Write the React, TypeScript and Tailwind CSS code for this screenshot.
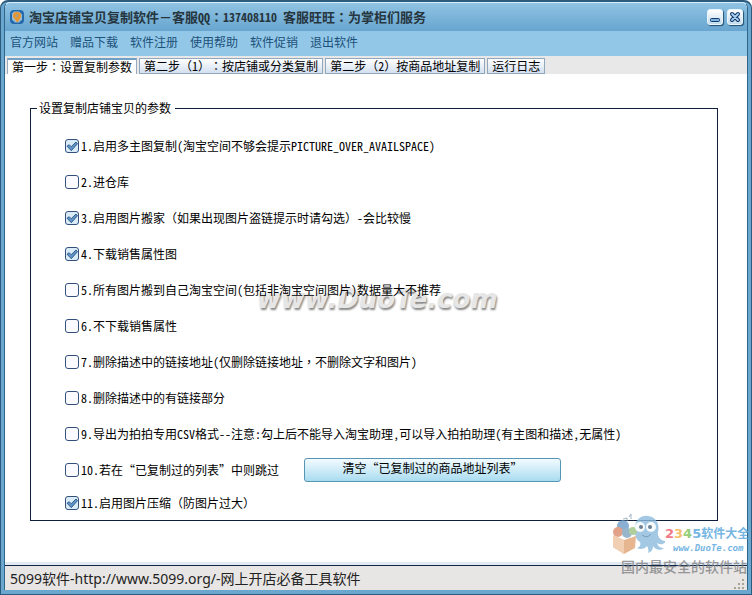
import { Fragment, useState } from "react";

const menuItems = ["官方网站", "赠品下载", "软件注册", "使用帮助", "软件促销", "退出软件"];

const tabs = [
    "第一步：设置复制参数",
    "第二步（1）：按店铺或分类复制",
    "第二步（2）按商品地址复制",
    "运行日志",
];

interface Option {
    id: number;
    label: string;
    checked: boolean;
}

const options: Option[] = [
    { id: 1, label: "1.启用多主图复制(淘宝空间不够会提示PICTURE_OVER_AVAILSPACE)", checked: true },
    { id: 2, label: "2.进仓库", checked: false },
    { id: 3, label: "3.启用图片搬家（如果出现图片盗链提示时请勾选）-会比较慢", checked: true },
    { id: 4, label: "4.下载销售属性图", checked: true },
    { id: 5, label: "5.所有图片搬到自己淘宝空间(包括非淘宝空间图片)数据量大不推荐", checked: false },
    { id: 6, label: "6.不下载销售属性", checked: false },
    { id: 7, label: "7.删除描述中的链接地址(仅删除链接地址，不删除文字和图片)", checked: false },
    { id: 8, label: "8.删除描述中的有链接部分", checked: false },
    {
        id: 9,
        label: "9.导出为拍拍专用CSV格式--注意:勾上后不能导入淘宝助理,可以导入拍拍助理(有主图和描述,无属性)",
        checked: false,
    },
    { id: 10, label: "10.若在“已复制过的列表”中则跳过", checked: false },
    { id: 11, label: "11.启用图片压缩（防图片过大）", checked: true },
];

// Half-width runs are set in a mono face at half the CJK advance,
// full-width colons and commas are centred in their cell.
function Mixed({ text }: { text: string }) {
    const parts = text.split(/([\x20-\x7e]+|[：，])/);
    return (
        <>
            {parts.map((part, i) => {
                if (/^[\x20-\x7e]+$/.test(part)) {
                    return (
                        <span key={i} className="font-['Noto_Sans_Mono_CJK_SC','Liberation_Mono',monospace] text-[12px]">
                            {part}
                        </span>
                    );
                }
                if (/^[：，]$/.test(part)) {
                    return (
                        <span key={i} lang="zh-TW" className="font-['Noto_Sans_CJK_TC',sans-serif]">
                            {part}
                        </span>
                    );
                }
                return <Fragment key={i}>{part}</Fragment>;
            })}
        </>
    );
}

function AppIcon() {
    return (
        <svg className="h-4 w-4 shrink-0" viewBox="0 0 16 16">
            <rect x="1" y="1" width="14" height="14" rx="4" fill="#2469ad" />
            <path d="M5 2.500h5l3 3v5l-3 3H6l-3-3v-6z" fill="#9dbccd" />
            <path d="M8 3a4 4 0 0 1 4 4c0 2.600-2.200 3.500-3 6H7.500C7.500 10.500 4 9.600 4 7a4 4 0 0 1 4-4z" fill="#e8962f" />
            <circle cx="8" cy="6.800" r="1.500" fill="#a9a08a" />
        </svg>
    );
}

function TitleBar() {
    return (
        <header className="flex h-7 items-center bg-linear-to-b from-[#8fc3e3] to-[#68a5cf] pr-1 pl-1">
            <AppIcon />
            <h1 className="ml-1 flex-1 text-[13px] leading-4 font-bold whitespace-nowrap text-[#26363f]">
                <Mixed text="淘宝店铺宝贝复制软件－客服QQ：137408110 客服旺旺：为掌柜们服务" />
            </h1>
            <div className="flex gap-1">
                <button
                    aria-label="最小化"
                    className="flex h-4 w-4 items-center justify-center rounded-[3px] border border-[#eaf5fb] bg-linear-to-b from-white to-[#c4dcec] shadow-[1px_1px_1px_#24506f]"
                >
                    <svg className="h-3 w-3" viewBox="0 0 12 12">
                        <rect x="1.500" y="7.500" width="9" height="3" rx="1" fill="#7db4de" stroke="#12396b" />
                    </svg>
                </button>
                <button
                    aria-label="关闭"
                    className="flex h-4 w-4 items-center justify-center rounded-[3px] border border-[#eaf5fb] bg-linear-to-b from-white to-[#c4dcec] shadow-[1px_1px_1px_#24506f]"
                >
                    <svg className="h-3 w-3" viewBox="0 0 12 12" strokeLinecap="round">
                        <path d="M3 3l6 6M9 3l-6 6" stroke="#12396b" strokeWidth="4" />
                        <path d="M3 3l6 6M9 3l-6 6" stroke="#a9d0ee" strokeWidth="1.800" />
                    </svg>
                </button>
            </div>
        </header>
    );
}

function OptionRow({ option, children }: { option: Option; children?: React.ReactNode }) {
    const [checked, setChecked] = useState(option.checked);

    return (
        <div className="flex h-9 items-center last:h-[30px]">
            <label className="flex items-center gap-0.5 whitespace-nowrap">
                <span className="relative flex h-3.5 w-3.5">
                    <input
                        type="checkbox"
                        checked={checked}
                        onChange={() => setChecked(!checked)}
                        className="h-3.5 w-3.5 appearance-none rounded-[3px] border border-[#34507c] bg-[#fafaff] checked:bg-[#d9ecf8]"
                    />
                    {checked && (
                        <svg className="pointer-events-none absolute inset-0 h-3.5 w-3.5" viewBox="0 0 14 14">
                            <path
                                d="M2 7.200l2.200-1.500 2 2 4.800-4.700 1.500 1.700-6.200 7z"
                                fill="#5f93c4"
                                stroke="#2c5486"
                                strokeWidth="0.900"
                                strokeLinejoin="round"
                            />
                        </svg>
                    )}
                </span>
                <span>
                    <Mixed text={option.label} />
                </span>
            </label>
            {children}
        </div>
    );
}

function SiteLogo() {
    return (
        <svg className="h-12 w-[52px] shrink-0" viewBox="2 -3 52 48">
            <path d="M12 6l4-1v3M18 4l2-3v5" fill="none" stroke="#8aa3b5" />
            <path
                d="M24 17C23 7 30 2 37 3c8 1 12 8 10 16-1 5 3 9 8 9-2 4-6 4-9 2 1 4 4 5 7 5-3 3-9 2-11-2 0 4-2 6-5 7 1-3 0-5-1-7-2 3-7 4-10 2 3-1 4-3 3-6-4-2-5-7-5-12z"
                fill="#8dbbdd"
            />
            <circle cx="12" cy="13" r="6" fill="#6f9cc8" />
            <circle cx="7" cy="19" r="5" fill="#dc8b6d" />
            <circle cx="16" cy="20" r="5" fill="#7fa4bf" />
            <circle cx="22" cy="18" r="4" fill="#9cc486" />
            <path d="M1 22l12 5 12-4-1 12-11 6-11-7z" fill="#dfa574" />
            <path d="M1 22l12 5v14L2 34z" fill="#edc4a0" />
            <circle cx="29" cy="14" r="5" fill="#f5f9fb" />
            <circle cx="40" cy="14" r="5" fill="#f5f9fb" />
            <circle cx="30" cy="14" r="2" fill="#456078" />
            <circle cx="39" cy="14" r="2" fill="#456078" />
            <path d="M31 22q5 4 9-1" fill="none" stroke="#5a86aa" />
        </svg>
    );
}

function SiteBadge() {
    return (
        <div className="pointer-events-none absolute right-0 bottom-5 w-[138px] opacity-80">
            <div className="flex">
                <SiteLogo />
                <div className="pt-4 font-bold whitespace-nowrap">
                    <p className="text-[12px] leading-[14px] text-[#54a5dc]">
                        <span className="font-['DejaVu_Sans',sans-serif] text-[13px]">
                            <span className="text-[#ee5a6c]">2</span>
                            <span className="text-[#f3b04c]">3</span>
                            <span className="text-[#7dc35c]">4</span>
                            <span>5</span>
                        </span>
                        软件大全
                    </p>
                    <p className="pl-2 font-['DejaVu_Sans_Mono',monospace] text-[9px] leading-[14px] text-[#54a5dc] italic">
                        www.DuoTe.com
                    </p>
                </div>
            </div>
            <p className="pl-2 text-[14px] leading-4 font-medium whitespace-nowrap text-[#808285]">国内最安全的软件站</p>
        </div>
    );
}

function SizeGrip() {
    return (
        <svg className="h-3 w-3 self-end" viewBox="0 0 12 12" fill="#a9a491">
            <path d="M9 1h2v2H9zM5 5h2v2H5zM9 5h2v2H9zM1 9h2v2H1zM5 9h2v2H5zM9 9h2v2H9z" />
        </svg>
    );
}

export default function App() {
    const [activeTab, setActiveTab] = useState(0);

    return (
        <div
            lang="zh-CN"
            className="min-h-screen bg-white font-['Noto_Sans_CJK_SC',sans-serif] text-[12px] leading-[14px] text-black [text-spacing-trim:space-all]"
        >
            <div className="relative flex min-h-screen flex-col rounded-t-lg border-t-2 border-r border-b border-l border-[#2b5c7d] bg-[#6ba6cf] px-[3px] pb-1">
                <div className="flex flex-1 flex-col overflow-hidden rounded-t-md border-x border-t border-x-[#2f668b] border-t-[#d8eefa] bg-white">
                    <TitleBar />

                    <nav className="flex h-[25px] items-start gap-3 bg-[#92c7e8] px-[5px] pt-px whitespace-nowrap">
                        {menuItems.map((item) => (
                            <button key={item} className="h-5 text-[#1d5279]">
                                {item}
                            </button>
                        ))}
                    </nav>

                    <div role="tablist" className="flex h-[18px] items-end gap-0.5 bg-[#e8e8e8] px-0.5 whitespace-nowrap">
                        {tabs.map((tab, i) => (
                            <button
                                key={tab}
                                role="tab"
                                aria-selected={i === activeTab}
                                onClick={() => setActiveTab(i)}
                                className={
                                    i === activeTab
                                        ? "h-4 border-x border-t-2 border-x-[#9aabbd] border-t-[#6f9fc4] bg-white px-1"
                                        : "h-4 border border-[#91a7bd] bg-linear-to-b from-white to-[#d3e0ef] px-1"
                                }
                            >
                                <Mixed text={tab} />
                            </button>
                        ))}
                    </div>

                    <main className="relative flex-1 pt-[27px] pr-[29px] pb-10 pl-[25px]">
                        <p className="pointer-events-none absolute top-[209px] left-[252px] font-['DejaVu_Sans',sans-serif] text-[26px] leading-8 font-bold text-[#e6e6e6] italic [text-shadow:1px_2px_2px_#888]">
                            www.DuoTe.com
                        </p>

                        <fieldset className="relative border border-[#10203c] pt-[13px] pb-0.5 pl-[34px]">
                            <legend className="-ml-7 pr-1 pl-0.5">设置复制店铺宝贝的参数</legend>
                            {options.map((option) => (
                                <OptionRow key={option.id} option={option}>
                                    {option.id === 10 && (
                                        <button className="ml-[25px] h-6 w-[257px] rounded-[3px] border border-[#5795b4] bg-linear-to-b from-[#f2fbff] to-[#a9dcf0] pb-1">
                                            清空“已复制过的商品地址列表”
                                        </button>
                                    )}
                                </OptionRow>
                            ))}
                        </fieldset>
                    </main>

                    <footer className="flex h-[25px] items-center justify-between border-t border-[#10284a] bg-[#e8e6e4] pr-0.5 pl-[5px] shadow-[0_-3px_0_#e3e9f0]">
                        <p className="pt-0.5 font-['Noto_Sans','Noto_Sans_CJK_SC',sans-serif] text-[14px] leading-5 text-[#222]">
                            5099软件-http://www.5099.org/-网上开店必备工具软件
                        </p>
                        <SizeGrip />
                    </footer>
                </div>
                <SiteBadge />
            </div>
        </div>
    );
}
